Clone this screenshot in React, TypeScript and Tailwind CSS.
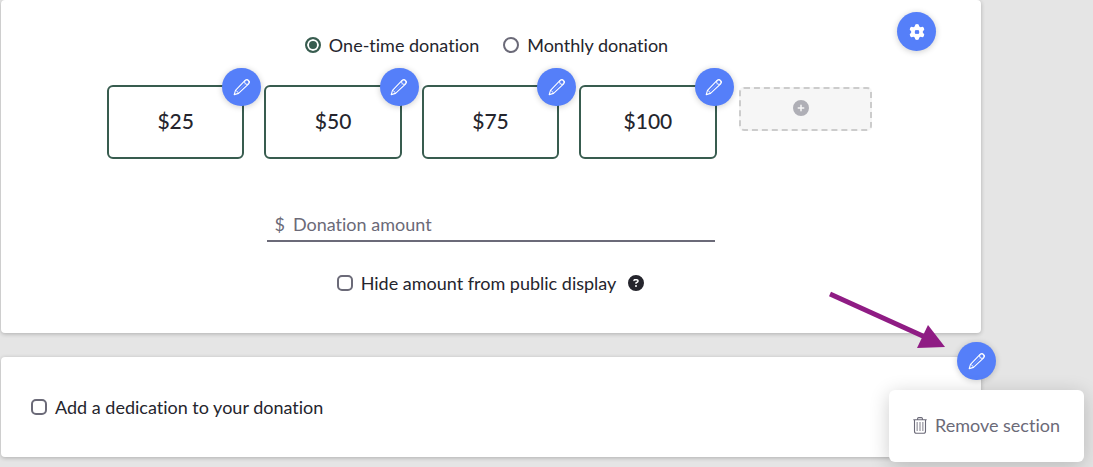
import { useState } from "react";
import { FaCirclePlus, FaCircleQuestion } from "react-icons/fa6";

function PencilIcon() {
  return (
    <svg width="18" height="18" viewBox="0 0 18 18" fill="none" stroke="currentColor" strokeWidth="1.1" strokeLinejoin="round" strokeLinecap="round" aria-hidden="true">
      <path d="M1.2 16.6 2.5 12.4 12.1 2.4A2.5 2.5 0 0 1 15.7 5.8L5.5 15.4Z" />
      <path d="M2.5 12.4Q4.9 12.8 5.5 15.4" strokeWidth="0.8" />
      <circle cx="14" cy="4" r="2.4" strokeWidth="1" />
      <path d="M4.9 13.2 12.1 6" strokeWidth="0.5" opacity="0.4" />
    </svg>
  );
}

function GearIcon() {
  return (
    <svg width="18" height="18" viewBox="-9 -9 18 18" aria-hidden="true">
      <g stroke="currentColor" strokeWidth="4.4" strokeLinecap="round">
        <path d="M0 -5.8V-4M0 5.8V4M-5 -2.9 -3.8 -2.2M5 -2.9 3.8 -2.2M-5 2.9 -3.8 2.2M5 2.9 3.8 2.2" />
      </g>
      <circle r="4.2" fill="none" stroke="currentColor" strokeWidth="3.4" />
    </svg>
  );
}

function TrashIcon() {
  return (
    <svg width="14" height="17" viewBox="0 0 14 17" fill="none" stroke="currentColor" aria-hidden="true">
      <path d="M0.3 2.7H13.7M4.6 2.5V1.6Q4.6.6 5.6.6H8.4Q9.4.6 9.4 1.6V2.5M1.5 3V14.2Q1.5 16.3 3.6 16.3H10.4Q12.5 16.3 12.5 14.2V3" strokeWidth="1.1" />
      <path d="M4.2 5V14M7 5V14M9.8 5V14" strokeWidth="1.6" opacity="0.55" />
    </svg>
  );
}

const round =
  "absolute flex h-[38px] w-[39px] items-center justify-center rounded-full bg-[#557ff9] text-white shadow-[0_1px_6px_rgba(0,0,0,0.2)]";
const box =
  "h-4 w-4 shrink-0 appearance-none rounded-[5px] border-2 border-[#6b6a78] bg-white checked:bg-[#385c4f]";
const radio =
  "h-4 w-4 shrink-0 appearance-none rounded-full border-2 border-[#6b6a78] bg-white checked:border-[#385c4f] checked:bg-[#385c4f] checked:shadow-[inset_0_0_0_2px_#fff]";
const card = "relative rounded-[4px] bg-white shadow-[0_1px_4px_rgba(0,0,0,0.24)]";

export default function App() {
  const [frequency, setFrequency] = useState("once");
  return (
    <main className="min-h-screen overflow-hidden bg-[#e5e5e5] pr-28 pb-2.5 pl-px font-['Lato',sans-serif] text-lg leading-6 text-[#25252d] [font-variant-ligatures:none]">
      <section className={`${card} pt-[33px] pr-[107px] pb-[38px] pl-[106px]`}>
        <button aria-label="Section settings" className={`${round} top-3 right-[45px] h-[39px]`}>
          <GearIcon />
        </button>
        <div className="flex justify-center gap-6 pr-2" role="radiogroup" aria-label="Frequency">
          <label className="flex items-center gap-2">
            <input type="radio" name="frequency" className={radio} checked={frequency === "once"} onChange={() => setFrequency("once")} />
            One-time donation
          </label>
          <label className="flex items-center gap-2">
            <input type="radio" name="frequency" className={radio} checked={frequency === "monthly"} onChange={() => setFrequency("monthly")} />
            Monthly donation
          </label>
        </div>
        <div className="mt-7 grid grid-cols-5 gap-5">
          {[25, 50, 75, 100].map((amount) => (
            <div key={amount} className="relative">
              <button className="h-[74px] w-full rounded-md border-2 border-[#385c4f] bg-white pb-0.5 text-[21px] font-medium">
                ${amount}
              </button>
              <button aria-label={`Edit $${amount}`} className={`${round} -top-[17px] -right-[17px]`}>
                <PencilIcon />
              </button>
            </div>
          ))}
          <button aria-label="Add amount" className="mx-0.5 mt-0.5 flex h-11 items-center justify-center rounded-[5px] border-2 border-dashed border-[#cccccc] bg-[#f6f6f6] pr-2 pb-0.5 text-[#afafb6]">
            <FaCirclePlus size={16} />
          </button>
        </div>
        <div className="mx-auto mt-[49px] flex h-[34px] max-w-[448px] items-start gap-2 border-b-2 border-[#6b6a78] pl-2 text-[#6b6a78]">
          <label htmlFor="amount" className="pt-1">$</label>
          <input id="amount" aria-label="Donation amount" placeholder="Donation amount" className="h-8 min-w-0 flex-1 bg-transparent outline-none placeholder:text-[#6b6a78] placeholder:opacity-100" />
        </div>
        <div className="mt-[29px] flex items-center justify-center gap-3">
          <label className="flex items-center gap-2">
            <input type="checkbox" className={box} />
            Hide amount from public display
          </label>
          <button aria-label="Help">
            <FaCircleQuestion size={16} />
          </button>
        </div>
      </section>

      <section className={`${card} mt-6 flex h-[100px] items-center px-[30px]`}>
        <label className="flex items-center gap-2">
          <input type="checkbox" className={box} />
          Add a dedication to your donation
        </label>
        <button aria-label="Edit section" className={`${round} -top-[15px] -right-[15px]`}>
          <PencilIcon />
        </button>
        <div className="absolute top-[33px] -right-[103px] rounded-md bg-white px-6 pt-[23px] pb-[25px] text-[#6b6a78] shadow-[0_4px_20px_rgba(0,0,0,0.2)]">
          <button className="flex items-center gap-2 whitespace-nowrap">
            <TrashIcon />
            Remove section
          </button>
        </div>
        <svg className="pointer-events-none absolute -top-[66px] right-9 text-[#8f1c84]" width="116" height="58" viewBox="0 0 116 58" aria-hidden="true">
          <path d="M1 3 96 46" stroke="currentColor" strokeWidth="5" />
          <path d="M99 34 116 56 88 57Z" fill="currentColor" />
        </svg>
      </section>
    </main>
  );
}
